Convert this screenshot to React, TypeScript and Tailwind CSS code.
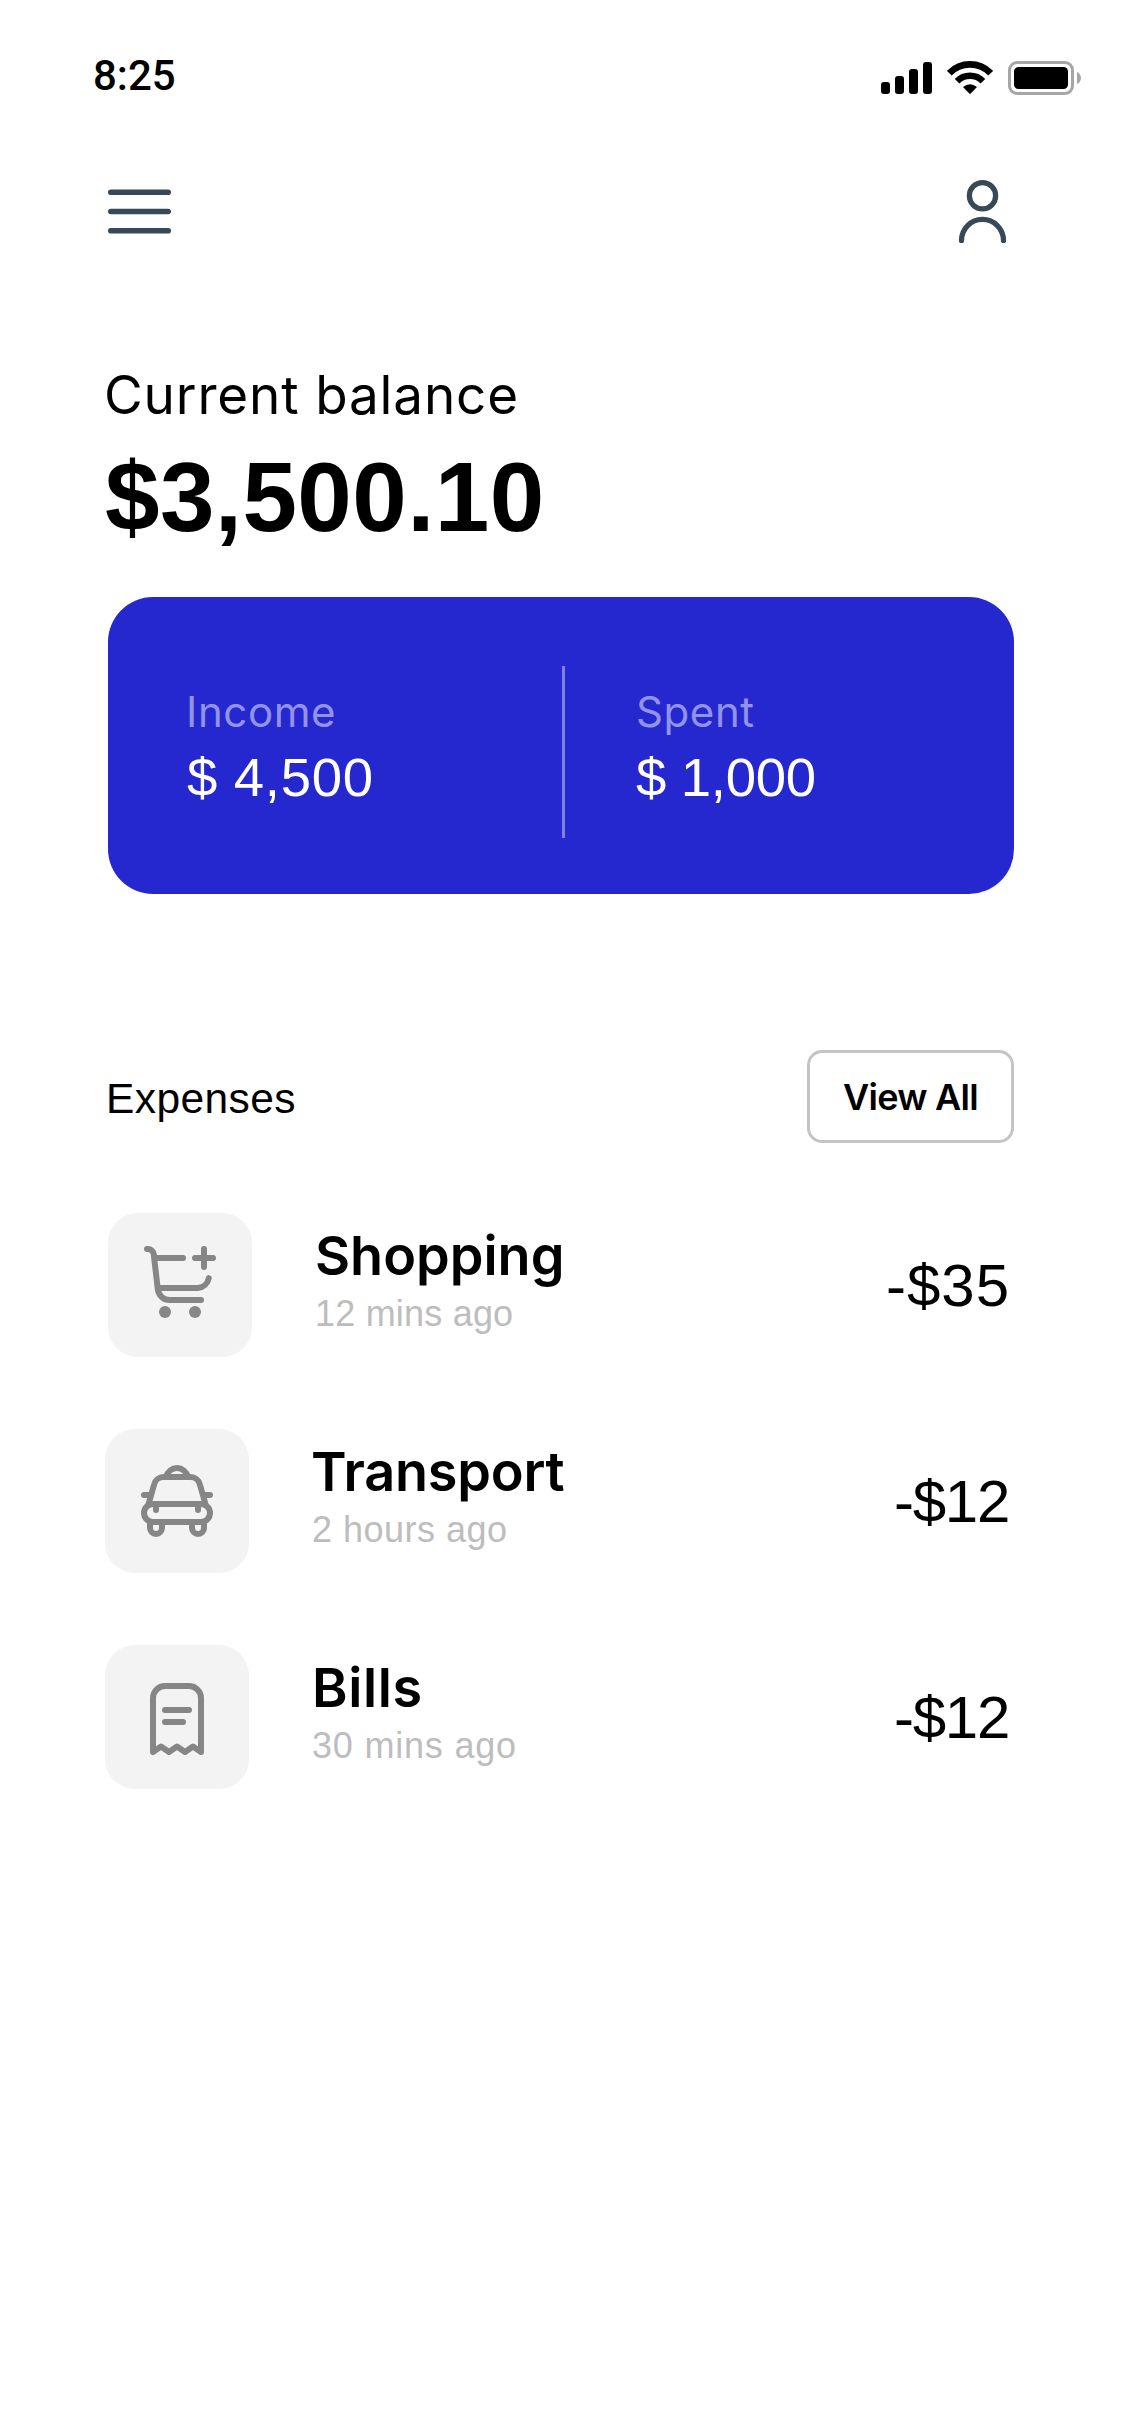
import type { ReactNode } from "react";

function SignalIcon() {
  return (
    <svg width="51" height="32" viewBox="0 0 51 32" fill="#000">
      <rect x="0" y="20" width="9" height="12" rx="3" />
      <rect x="14" y="14" width="9" height="18" rx="3" />
      <rect x="28" y="7" width="9" height="25" rx="3" />
      <rect x="42" y="0" width="9" height="32" rx="3" />
    </svg>
  );
}

function WifiIcon() {
  return (
    <svg width="46" height="33" viewBox="0 0 46 33" fill="none" stroke="#000" strokeWidth="6.6">
      <path d="M2.3 12.2A28.8 28.8 0 0 1 43.7 12.2" />
      <path d="M10.1 20.2A18 18 0 0 1 35.9 20.2" />
      <path d="M16 26.1Q23 20.3 30 26.1L23.7 32.5Q23 33.2 22.3 32.5Z" fill="#000" stroke="none" />
    </svg>
  );
}

function BatteryIcon() {
  return (
    <svg width="73" height="34" viewBox="0 0 73 34">
      <rect x="1.5" y="1.5" width="63" height="31" rx="7.5" fill="none" stroke="#a6a6a6" strokeWidth="3" />
      <rect x="6" y="6" width="54" height="22" rx="4.5" fill="#000" />
      <path d="M69 11C74.3 13.2 74.3 20.8 69 23Z" fill="#a6a6a6" />
    </svg>
  );
}

function MenuIcon() {
  return (
    <svg width="63" height="63" viewBox="0 0 63 63" stroke="#374957" strokeWidth="5.6" strokeLinecap="round">
      <path d="M2.8 12.3H60.2M2.8 31.5H60.2M2.8 50.7H60.2" />
    </svg>
  );
}

function UserIcon() {
  return (
    <svg width="63" height="63" viewBox="0 0 24 24" fill="none" stroke="#374957" strokeWidth="2" strokeLinecap="round">
      <circle cx="12" cy="6" r="5" />
      <path d="M4 23a8 8 0 0 1 16 0" />
    </svg>
  );
}

function Glyph({ children }: { children: ReactNode }) {
  return (
    <svg
      width="72"
      height="72"
      viewBox="0 0 24 24"
      fill="none"
      stroke="#868686"
      strokeWidth="2"
      strokeLinecap="round"
      strokeLinejoin="round"
      className="overflow-visible"
    >
      {children}
    </svg>
  );
}

function CartIcon() {
  return (
    <Glyph>
      <path d="M1 1h.25a2 2 0 0 1 2 1.8L4.6 14.4A4 4 0 0 0 8.6 18H19" />
      <path d="M4 4h9M17 4h6M20 1v6M5 14h13a4 4 0 0 0 3.6-3.3" />
      <circle cx="7" cy="22" r="2" fill="#868686" stroke="none" />
      <circle cx="17" cy="22" r="2" fill="#868686" stroke="none" />
    </Glyph>
  );
}

function TaxiIcon() {
  return (
    <Glyph>
      <path d="M8.3 4C8.9 2.2 10.3 1 12 1s3.1 1.2 3.7 3" />
      <path d="M2.4 13.4 4.4 6.4A3.2 3.2 0 0 1 7.5 4h9a3.2 3.2 0 0 1 3.1 2.4l2 7" />
      <path d="M1 10h1.6M21.4 10H23M5 14v1M19 14v1" />
      <rect x="1" y="13" width="22" height="6" rx="3" />
      <path d="M3 19v2a2 2 0 0 0 4 0v-2M17 19v2a2 2 0 0 0 4 0v-2" />
    </Glyph>
  );
}

function ReceiptIcon() {
  return (
    <Glyph>
      <path d="M4 23V5a4 4 0 0 1 4-4h8a4 4 0 0 1 4 4v18l-2.67-1.8L14.67 23 12 21.2 9.33 23 6.67 21.2Z" />
      <path d="M8 9h8M8 13h6" />
    </Glyph>
  );
}

const expenses = [
  {
    title: "Shopping",
    time: "12 mins ago",
    amount: "-$35",
    icon: <CartIcon />,
    row: "pl-[3px]",
    iconBox: "pt-[33px]",
    titleStyle: "tracking-normal",
    timeStyle: "tracking-[0.2px]",
    amountStyle: "mr-px tracking-[1px]",
  },
  {
    title: "Transport",
    time: "2 hours ago",
    amount: "-$12",
    icon: <TaxiIcon />,
    row: "",
    iconBox: "pt-9",
    titleStyle: "-ml-px tracking-[-0.2px]",
    timeStyle: "tracking-[0.5px]",
    amountStyle: "mr-[2px] tracking-[-1.3px]",
  },
  {
    title: "Bills",
    time: "30 mins ago",
    amount: "-$12",
    icon: <ReceiptIcon />,
    row: "",
    iconBox: "pt-[38px]",
    titleStyle: "tracking-[0.6px]",
    timeStyle: "tracking-[0.8px]",
    amountStyle: "mr-[2px] tracking-[-1.3px]",
  },
];

export default function App() {
  return (
    <div className="flex h-[2436px] w-[1125px] flex-col overflow-hidden bg-white font-['Liberation_Sans',Arial,sans-serif] text-black">
      <header className="flex h-[156px] items-start justify-between pl-[93px] pr-11">
        <span className="mt-[51px] font-['Roboto',sans-serif] text-[42px] leading-[50px] font-medium">8:25</span>
        <div className="mt-[61px] flex items-start">
          <div className="mt-px mr-[15px]">
            <SignalIcon />
          </div>
          <div className="mr-[15px]">
            <WifiIcon />
          </div>
          <BatteryIcon />
        </div>
      </header>

      <nav className="mt-6 flex justify-between pr-[111px] pl-[108px]">
        <button type="button" aria-label="Menu">
          <MenuIcon />
        </button>
        <button type="button" aria-label="Profile">
          <UserIcon />
        </button>
      </nav>

      <section className="mt-[122px] pl-[105px]">
        <h1 className="-ml-px font-['Inter',sans-serif] text-[53px] leading-[60px] tracking-[0.85px]">Current balance</h1>
        <p className="mt-[22px] text-[98px] leading-[100px] font-bold tracking-[0.4px]">$3,500.10</p>
      </section>

      <section className="mt-[50px] ml-[108px] flex h-[297px] w-[906px] rounded-[45px] bg-[#2527cf] text-white">
        <div className="w-[454px] pt-[90px] pl-[79px]">
          <p className="-ml-px font-['Inter',sans-serif] text-[42px] leading-[50px] tracking-[0.6px] text-white/50">
            Income
          </p>
          <p className="mt-[11px] text-[54.5px] leading-[60px] tracking-[0.7px]">$ 4,500</p>
        </div>
        <div className="mt-[69px] h-[172px] w-[3px] bg-[#7f80e2]" />
        <div className="pt-[90px] pl-[71px]">
          <p className="font-['Inter',sans-serif] text-[42px] leading-[50px] tracking-[0.6px] text-white/50">Spent</p>
          <p className="mt-[11px] text-[54.5px] leading-[60px] tracking-[-0.3px]">$ 1,000</p>
        </div>
      </section>

      <section className="mt-[156px] flex h-[93px] items-center justify-between pr-[111px] pl-[106px]">
        <h2 className="pt-1 text-[42.5px] leading-[50px] tracking-[0.4px]">Expenses</h2>
        <button
          type="button"
          className="h-[93px] w-[207px] rounded-[15px] border-3 border-[#c4c4c4] font-['Inter',sans-serif] text-[36px] leading-[50px] font-semibold tracking-[-0.7px]"
        >
          View All
        </button>
      </section>

      <ul className="mt-[70px] flex flex-col gap-[72px] pr-[114px] pl-[105px]">
        {expenses.map((item) => (
          <li key={item.title} className={`flex h-36 items-center ${item.row}`}>
            <div className={`flex size-36 items-start justify-center rounded-[30px] bg-[#f3f3f3] ${item.iconBox}`}>
              {item.icon}
            </div>
            <div className="ml-[63px] h-36 pt-[13px]">
              <h3 className={`font-['Inter',sans-serif] text-[54px] leading-[60px] font-semibold ${item.titleStyle}`}>
                {item.title}
              </h3>
              <p className={`mt-1.5 text-[36px] leading-[44px] text-[#bdbdbd] ${item.timeStyle}`}>{item.time}</p>
            </div>
            <span className={`ml-auto pt-0.5 text-[60px] leading-[70px] ${item.amountStyle}`}>{item.amount}</span>
          </li>
        ))}
      </ul>
    </div>
  );
}
